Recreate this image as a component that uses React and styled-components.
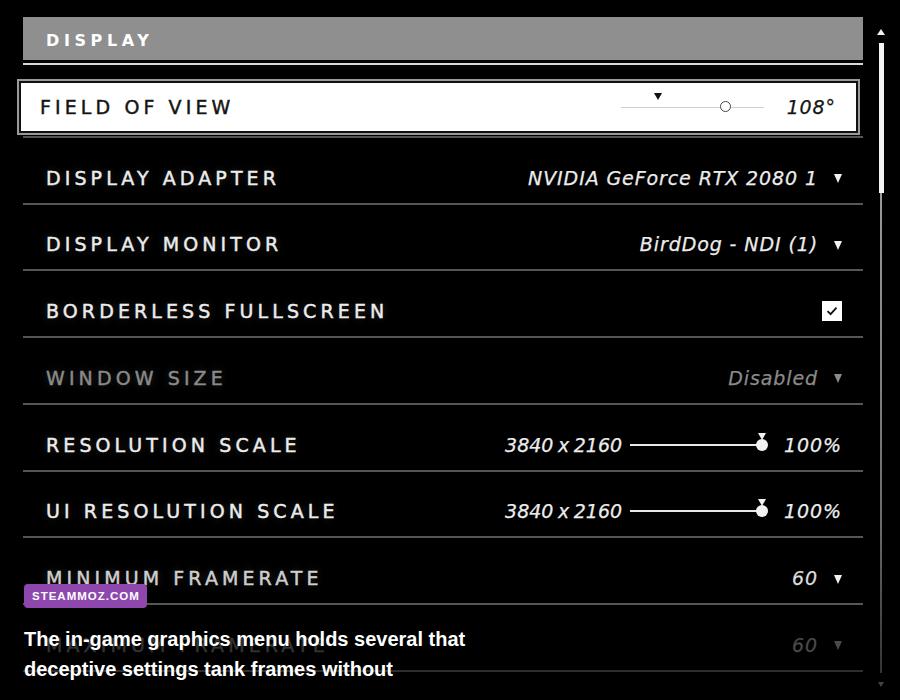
import React from 'react';
import styled, { createGlobalStyle, css } from 'styled-components';

const GlobalStyle = createGlobalStyle`
  html, body {
    margin: 0;
    padding: 0;
    background: #000;
    overflow: hidden;
  }
  body {
    font-family: "DejaVu Sans", sans-serif;
  }
`;

const Screen = styled.div`
  position: relative;
  width: 900px;
  height: 700px;
  background: #000;
  display: flex;
  padding: 17px 0 0 23px;
  box-sizing: border-box;
  gap: 13px;
`;

const Panel = styled.div`
  width: 840px;
  display: flex;
  flex-direction: column;
`;

const Header = styled.div`
  height: 43px;
  box-sizing: border-box;
  background: #8f8f8f;
  display: flex;
  align-items: center;
  padding: 4px 0 0 23px;
  color: #fff;
  font-weight: bold;
  font-size: 16px;
  letter-spacing: 4.6px;
  box-shadow: 0 3px 0 #000, 0 5px 0 #d8d8d8;
  margin-bottom: 11px;
`;

const Row = styled.div`
  height: 66.75px;
  box-sizing: border-box;
  display: flex;
  align-items: center;
  padding: 15px 21px 0 23px;
  border-bottom: 2px solid #555;
  ${(p) => p.$dim && css`border-bottom-color: #2e2e2e;`}
`;

const SelectedRow = styled.div`
  height: 66.75px;
  box-sizing: border-box;
  padding: 10px 5px 3px 0;
  border-bottom: 2px solid #555;
`;

const SelectedBox = styled.div`
  height: 100%;
  margin-left: -4px;
  background: #fff;
  border: 2px solid #111;
  outline: 2px solid #9a9a9a;
  box-sizing: border-box;
  display: flex;
  align-items: center;
  padding: 0 20px 0 19px;
  color: #111;
`;

const Label = styled.div`
  flex: 1;
  font-size: 19px;
  letter-spacing: 4.1px;
  -webkit-text-stroke: 0.45px ${(p) => p.$color || '#ececec'};
  color: ${(p) => p.$color || '#ececec'};
  text-shadow: ${(p) => (p.$dark ? 'none' : '0 0 8px rgba(80,80,80,0.6)')};
`;

const Value = styled.div`
  font-style: italic;
  font-size: 19px;
  letter-spacing: ${(p) => (p.$tight ? '0' : '0.9px')};
  word-spacing: ${(p) => (p.$tight ? '-1.5px' : '0')};
  -webkit-text-stroke: 0.25px ${(p) => p.$color || '#ececec'};
  color: ${(p) => p.$color || '#ececec'};
`;

const Caret = styled.span`
  width: 0;
  height: 0;
  border-left: 4.5px solid transparent;
  border-right: 4.5px solid transparent;
  border-top: 9px solid ${(p) => p.$color || '#f2f2f2'};
  margin-left: 16px;
  margin-top: 2px;
`;

const Check = styled.div`
  width: 20px;
  height: 20px;
  background: #fff;
  display: flex;
  align-items: center;
  justify-content: center;
`;

const Slider = styled.div`
  position: relative;
  width: ${(p) => p.$w}px;
  height: 20px;
  margin: 0 ${(p) => p.$mr || 0}px 0 ${(p) => p.$ml || 0}px;
`;

const Track = styled.div`
  position: absolute;
  left: 0;
  right: 0;
  top: 50%;
  height: ${(p) => (p.$light ? 1 : 2)}px;
  margin-top: ${(p) => (p.$light ? 0 : -1)}px;
  background: ${(p) => (p.$light ? '#cfcfcf' : '#e8e8e8')};
`;

const Knob = styled.div`
  position: absolute;
  top: 50%;
  width: ${(p) => (p.$hollow ? 11 : 12)}px;
  height: ${(p) => (p.$hollow ? 11 : 12)}px;
  margin: -6px 0 0 -6px;
  box-sizing: border-box;
  border-radius: 50%;
  background: ${(p) => (p.$hollow ? '#fff' : '#f2f2f2')};
  border: ${(p) => (p.$hollow ? '1.5px solid #444' : 'none')};
`;

const Marker = styled.div`
  position: absolute;
  top: ${(p) => p.$top}px;
  width: 0;
  height: 0;
  margin-left: -4px;
  border-left: 4px solid transparent;
  border-right: 4px solid transparent;
  border-top: 7px solid ${(p) => p.$color};
`;

const Scroll = styled.div`
  width: 10px;
  display: flex;
  flex-direction: column;
  align-items: center;
  padding-top: 12px;
`;

const ScrollUp = styled.div`
  width: 0;
  height: 0;
  border-left: 4px solid transparent;
  border-right: 4px solid transparent;
  border-bottom: 6px solid #f0f0f0;
  margin-bottom: 8px;
`;

const Thumb = styled.div`
  width: 5px;
  height: 150px;
  background: #f4f4f4;
`;

const Rail = styled.div`
  width: 2px;
  height: 480px;
  background: linear-gradient(#9a9a9a, #6a6a6a 70%, #333);
`;

const ScrollDown = styled.div`
  width: 0;
  height: 0;
  margin-top: 9px;
  border-left: 3px solid transparent;
  border-right: 3px solid transparent;
  border-top: 5px solid #444;
`;

const Caption = styled.div`
  position: absolute;
  left: 24px;
  top: 584px;
  display: flex;
  flex-direction: column;
  align-items: flex-start;
  font-family: "Liberation Sans", Arial, sans-serif;
`;

const Badge = styled.div`
  height: 24px;
  padding: 0 7px 0 8px;
  background: #8e47ad;
  border-radius: 4px;
  color: #fff;
  font-weight: bold;
  font-size: 11.5px;
  letter-spacing: 1px;
  display: flex;
  align-items: center;
  margin-bottom: 16px;
`;

const CaptionText = styled.p`
  margin: 0;
  color: #fff;
  font-weight: bold;
  font-size: 20px;
  line-height: 30px;
  width: 470px;
`;

function RangeSlider({ width, pos, mark, light, ml, mr }) {
  return (
    <Slider $w={width} $ml={ml} $mr={mr}>
      <Track $light={light} />
      <Marker $top={light ? -4 : -2} $color={light ? '#111' : '#f2f2f2'} style={{ left: `${mark}%` }} />
      <Knob $hollow={light} style={{ left: `${pos}%` }} />
    </Slider>
  );
}

const dropdowns = [
  { label: 'DISPLAY ADAPTER', value: 'NVIDIA GeForce RTX 2080 1' },
  { label: 'DISPLAY MONITOR', value: 'BirdDog - NDI (1)' },
];

export default function App() {
  return (
    <Screen>
      <GlobalStyle />
      <Panel>
        <Header>DISPLAY</Header>

        <SelectedRow>
          <SelectedBox>
            <Label $color="#151515" $dark>FIELD OF VIEW</Label>
            <RangeSlider width={143} pos={74} mark={26} light mr={23} />
            <Value $color="#151515">108°</Value>
          </SelectedBox>
        </SelectedRow>

        {dropdowns.map((d) => (
          <Row key={d.label}>
            <Label>{d.label}</Label>
            <Value>{d.value}</Value>
            <Caret />
          </Row>
        ))}

        <Row>
          <Label>BORDERLESS FULLSCREEN</Label>
          <Check>
            <svg width="12" height="10" viewBox="0 0 12 10">
              <path d="M1.5 5.2 L4.6 8.2 L10.5 1.6" fill="none" stroke="#111" strokeWidth="1.8" />
            </svg>
          </Check>
        </Row>

        <Row>
          <Label $color="#8a8a8a">WINDOW SIZE</Label>
          <Value $color="#8a8a8a">Disabled</Value>
          <Caret $color="#8a8a8a" />
        </Row>

        {['RESOLUTION SCALE', 'UI RESOLUTION SCALE'].map((l) => (
          <Row key={l}>
            <Label>{l}</Label>
            <Value $tight>3840 x 2160</Value>
            <RangeSlider width={136} pos={97} mark={97} ml={8} mr={18} />
            <Value>100%</Value>
          </Row>
        ))}

        <Row>
          <Label $color="#cfcfcf">MINIMUM FRAMERATE</Label>
          <Value $color="#dcdcdc">60</Value>
          <Caret />
        </Row>

        <Row $dim>
          <Label $color="#333" $dark>MAXIMUM FRAMERATE</Label>
          <Value $color="#4a4a4a">60</Value>
          <Caret $color="#4a4a4a" />
        </Row>
      </Panel>

      <Scroll>
        <ScrollUp />
        <Thumb />
        <Rail />
        <ScrollDown />
      </Scroll>

      <Caption>
        <Badge>STEAMMOZ.COM</Badge>
        <CaptionText>
          The in-game graphics menu holds several that deceptive settings tank frames without
        </CaptionText>
      </Caption>
    </Screen>
  );
}
